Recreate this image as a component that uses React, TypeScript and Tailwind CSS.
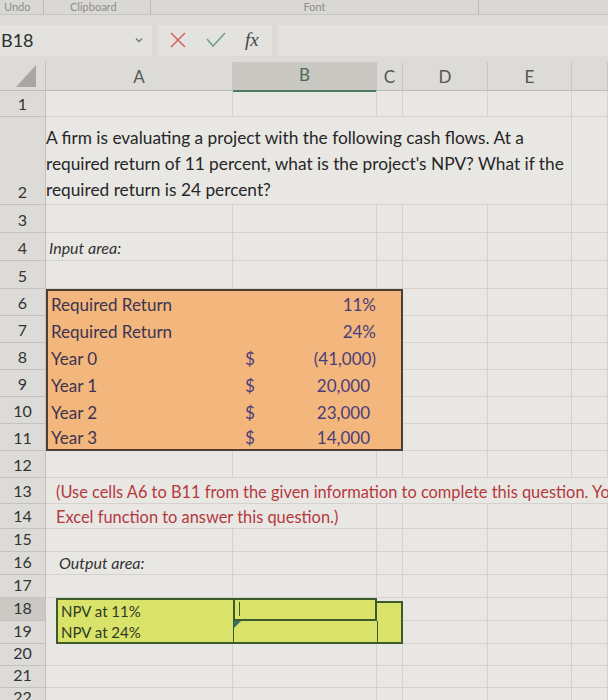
import React from "react";

const GRID = "grid grid-cols-[187px_144px_26px_85px_84px_1fr]";
const LINE = "border-r border-b border-[#d3d2ce]";
const FILL_Y = "bg-[#d9e36a]";

function Blank({ n = 6 }: { n?: number }) {
  return (
    <>
      {Array.from({ length: n }).map((_, i) => (
        <div key={i} className={LINE} />
      ))}
    </>
  );
}

interface RowProps {
  n: number;
  h: string;
  active?: boolean;
  children?: React.ReactNode;
}

function Row({ n, h, active, children }: RowProps) {
  return (
    <div className={`flex ${h}`}>
      <div
        className={`w-[46px] shrink-0 flex items-end justify-center pb-[1px] text-[16px] leading-[22px] text-[#333] border-r border-b border-[#c4c2be] ${
          active ? "bg-[#cbc9c4]" : "bg-[#dddbd7]"
        }`}
      >
        {n}
      </div>
      <div className={`flex-1 ${GRID}`}>{children ?? <Blank />}</div>
    </div>
  );
}

interface OrangeProps {
  n: number;
  label: string;
  dollar?: boolean;
  value: string;
  pos?: boolean;
  first?: boolean;
  last?: boolean;
}

function OrangeRow({ n, label, dollar, value, pos, first, last }: OrangeProps) {
  return (
    <Row n={n} h="h-[27px]">
      <div
        className={`col-span-3 grid grid-cols-[185px_144px_1fr] bg-[#f3b67c] border-x-2 border-[#4e3f33] ${
          first ? "border-t-2" : ""
        } ${last ? "border-b-2" : ""} text-[17px] leading-[23px]`}
      >
        <div className="flex items-end pl-[3px] text-[#3b3452]">{label}</div>
        <div className="flex items-end justify-between pl-3 text-[#4a3e7a]">
          <span>{dollar ? "$" : ""}</span>
          <span className={pos ? "pr-[7px]" : "pr-[1px]"}>{value}</span>
        </div>
        <div />
      </div>
      <Blank n={3} />
    </Row>
  );
}

const inputs: OrangeProps[] = [
  { n: 6, label: "Required Return", value: "11%", first: true },
  { n: 7, label: "Required Return", value: "24%" },
  { n: 8, label: "Year 0", dollar: true, value: "(41,000)" },
  { n: 9, label: "Year 1", dollar: true, value: "20,000", pos: true },
  { n: 10, label: "Year 2", dollar: true, value: "23,000", pos: true },
  { n: 11, label: "Year 3", dollar: true, value: "14,000", pos: true, last: true },
];

const headers = ["A", "B", "C", "D", "E", ""];

export default function App() {
  return (
    <div className="w-[608px] h-[700px] overflow-hidden bg-[#e8e7e4] font-[Lato,sans-serif] text-[#2b2b2b]">
      {/* Ribbon group labels */}
      <div className="h-[15px] bg-[#d9d8d5] border-b border-[#c8c6c2] flex text-[11px] leading-[13px] text-[#8d8c89]">
        <div className="w-[44px] pl-1 border-r border-[#bdbbb7]">Undo</div>
        <div className="w-[107px] pl-[26px] border-r border-[#bdbbb7]">Clipboard</div>
        <div className="w-[328px] text-center border-r border-[#bdbbb7]">Font</div>
        <div className="flex-1" />
      </div>

      {/* Formula bar */}
      <div className="h-[47px] bg-[#dcdbd8] flex items-center gap-[6px] pt-[3px]">
        <div className="w-[152px] h-[31px] bg-[#e3e2df] flex items-center justify-between pr-2">
          <span className="text-[18px] pl-[1px] text-[#2e2e2e]">B18</span>
          <svg width="10" height="8" viewBox="0 0 10 8" className="text-[#777]">
            <path d="M2 2.5 L5 5.5 L8 2.5" fill="none" stroke="currentColor" strokeWidth="1.4" />
          </svg>
        </div>
        <div className="w-[114px] h-[31px] bg-[#e3e2df] flex items-center pl-[11px] gap-[19px]">
          <svg width="18" height="18" viewBox="0 0 18 18">
            <path d="M2 2 L16 16 M16 2 L2 16" stroke="#d56565" strokeWidth="1.6" fill="none" />
          </svg>
          <svg width="20" height="16" viewBox="0 0 20 16">
            <path d="M1 7 L7 14 L19 1" stroke="#6fa383" strokeWidth="1.6" fill="none" />
          </svg>
          <span className="font-['Liberation_Serif',serif] italic text-[19px] text-[#444]">
            fx
          </span>
        </div>
        <div className="flex-1 h-[31px] bg-[#e3e2df]" />
      </div>

      {/* Column headers */}
      <div className="flex h-[29px] bg-[#dddbd7] border-b border-[#bdbbb7]">
        <div className="w-[46px] shrink-0 flex items-end justify-end pr-[9px] pb-[3px] border-r border-[#c4c2be]">
          <svg width="20" height="22" viewBox="0 0 20 22">
            <path d="M20 0 L20 22 L0 22 Z" fill="#a9a7a3" />
          </svg>
        </div>
        <div className={`flex-1 ${GRID}`}>
          {headers.map((l) => (
            <div
              key={l || "f"}
              className={`flex items-end justify-center pb-[2px] text-[17px] border-r border-[#c9c7c3] ${
                l === "B"
                  ? "bg-[#c9c8c2] text-[#4c6a55] border-b-2 border-b-[#4f7a5d]"
                  : "text-[#555]"
              }`}
            >
              {l}
            </div>
          ))}
        </div>
      </div>

      <Row n={1} h="h-[26px]" />
      <Row n={2} h="h-[88px]">
        <div className="col-span-5 border-b border-r border-[#d3d2ce] flex items-end pl-[0px] pb-[1px] text-[17.3px] leading-[26px] text-[#262626]">
          <p>
            A firm is evaluating a project with the following cash flows. At a
            <br />
            required return of 11 percent, what is the project's NPV? What if the
            <br />
            required return is 24 percent?
          </p>
        </div>
        <div className={LINE} />
      </Row>
      <Row n={3} h="h-[28px]" />
      <Row n={4} h="h-[28px]">
        <div className={`${LINE} flex items-end pl-[3px] text-[16px] leading-[24px] italic text-[#333]`}>
          Input area:
        </div>
        <Blank n={5} />
      </Row>
      <Row n={5} h="h-[28px]" />

      {inputs.map((r) => (
        <OrangeRow key={r.n} {...r} />
      ))}

      <Row n={12} h="h-[27px]" />
      <Row n={13} h="h-[26px]">
        <div className="col-span-6 border-b border-[#d3d2ce] flex items-end pl-[10px] text-[16.4px] leading-[23px] text-[#b5383d] whitespace-nowrap overflow-hidden">
          (Use cells A6 to B11 from the given information to complete this question. You
        </div>
      </Row>
      <Row n={14} h="h-[25px]">
        <div className="col-span-2 border-b border-r border-[#d3d2ce] flex items-end pl-[10px] text-[16.4px] leading-[23px] text-[#b5383d] whitespace-nowrap">
          Excel function to answer this question.)
        </div>
        <Blank n={4} />
      </Row>
      <Row n={15} h="h-[23px]" />
      <Row n={16} h="h-[23px]">
        <div className={`${LINE} flex items-end pl-[13px] text-[16px] leading-[22px] italic text-[#333]`}>
          Output area:
        </div>
        <Blank n={5} />
      </Row>
      <Row n={17} h="h-[23px]" />
      <Row n={18} h="h-[23px]" active>
        <div className={`${FILL_Y} ml-[10px] border-l-2 border-t-2 border-[#3d5a2b] flex items-end pl-[3px] text-[15px] leading-[20px] text-[#2e3a22]`}>
          NPV at 11%
        </div>
        <div className={`${FILL_Y} border-2 border-[#3d5a2b] relative`}>
          <div className="absolute left-[4px] top-[2px] w-px h-[14px] bg-[#3d5a2b]" />
        </div>
        <div className={`${FILL_Y} border-t-2 border-r-2 border-[#3d5a2b] mt-[3px]`} />
        <Blank n={3} />
      </Row>
      <Row n={19} h="h-[23px]">
        <div className={`${FILL_Y} ml-[10px] border-l-2 border-b-2 border-[#3d5a2b] flex items-end pl-[3px] text-[15px] leading-[20px] text-[#2e3a22]`}>
          NPV at 24%
        </div>
        <div className={`${FILL_Y} border-l border-b-2 border-[#3d5a2b] relative`}>
          <div className="absolute left-0 top-0 w-0 h-0 border-t-[7px] border-r-[7px] border-t-[#3b6d6a] border-r-transparent" />
        </div>
        <div className={`${FILL_Y} border-l border-b-2 border-r-2 border-[#3d5a2b]`} />
        <Blank n={3} />
      </Row>
      <Row n={20} h="h-[22px]" />
      <Row n={21} h="h-[22px]" />
      <Row n={22} h="h-[22px]" />
    </div>
  );
}
